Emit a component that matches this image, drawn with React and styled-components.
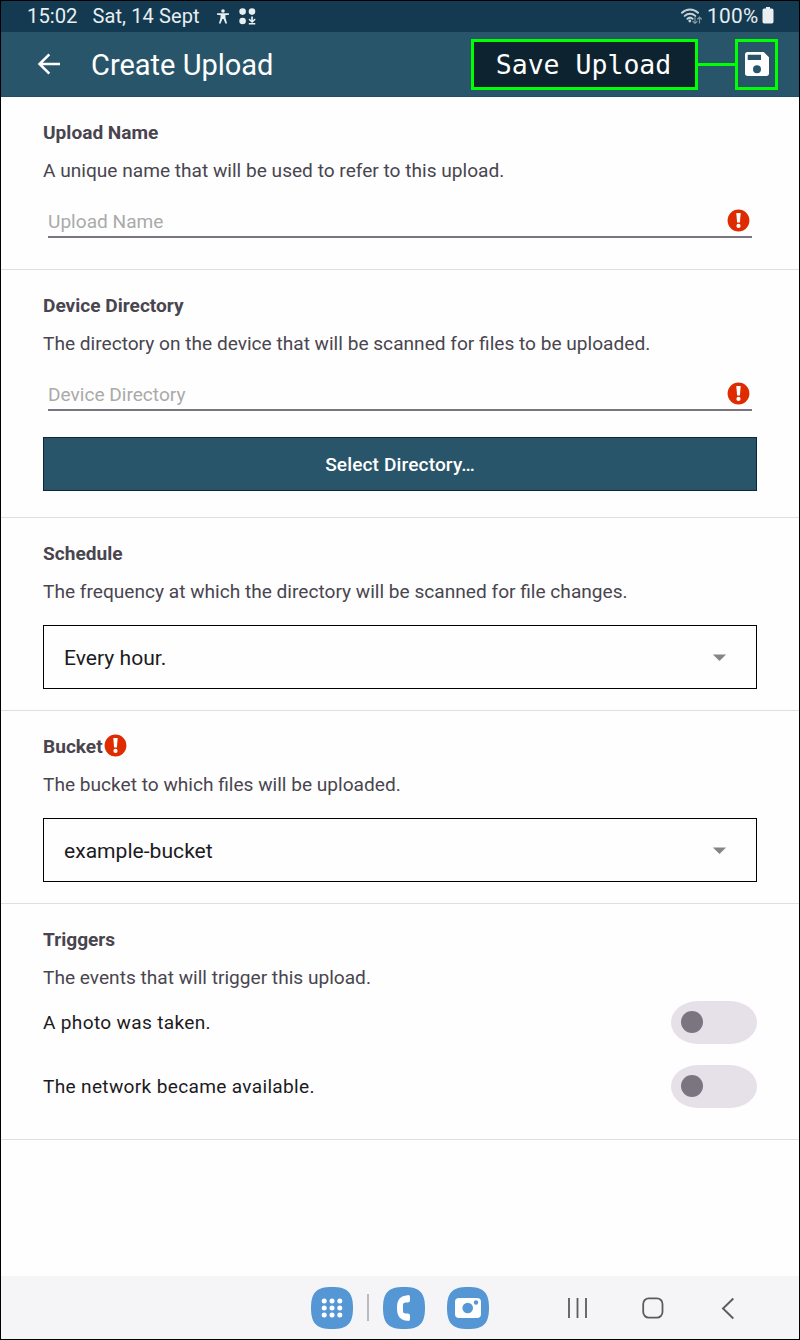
import React from "react";
import styled, { createGlobalStyle } from "styled-components";

const GlobalStyle = createGlobalStyle`
  * { box-sizing: border-box; }
  body { margin: 0; background: #fff; font-family: Roboto, "Liberation Sans", sans-serif; }
`;

const Screen = styled.div`
  width: 800px;
  height: 1340px;
  border: 1px solid #000;
  display: flex;
  flex-direction: column;
  background: #fefefe;
  overflow: hidden;
`;

const StatusBar = styled.div`
  height: 31px;
  flex: none;
  display: flex;
  align-items: center;
  justify-content: space-between;
  padding: 0 25.5px 1px 26px;
  background: #133a50;
  color: #e9eef1;
  font-size: 20px;
  line-height: 30px;
`;

const StatusGroup = styled.div`
  display: flex;
  align-items: center;
  white-space: pre;
  svg { display: block; }
`;

const StatusText = styled.span`
  font-size: ${(p) => p.$size || "20px"};
  letter-spacing: ${(p) => p.$spacing || "0"};
  margin-right: ${(p) => p.$gap || "0"};
`;

const Toolbar = styled.header`
  height: 65px;
  flex: none;
  display: flex;
  align-items: center;
  padding: 0 21px 0 35px;
  background: #29556b;
  border-bottom: 1px solid #214c63;
  color: #fff;
  svg { display: block; }
`;

const Heading = styled.h1`
  margin: 0 auto 0 31px;
  font-size: 29px;
  font-weight: 400;
  line-height: 40px;
  padding-top: 2px;
`;

const Callout = styled.div`
  width: 227px;
  height: 51px;
  padding-right: 2px;
  border: 3px solid #00ff00;
  background: #0d2430;
  font: 26.5px/45px "DejaVu Sans Mono", monospace;
  text-align: center;
  white-space: pre;
`;

const Connector = styled.div`
  width: 37px;
  height: 3px;
  background: #00ff00;
`;

const SaveButton = styled.button`
  width: 43px;
  height: 51px;
  padding: 0;
  border: 3px solid #00ff00;
  background: none;
  display: flex;
  align-items: center;
  justify-content: center;
`;

const Section = styled.section`
  flex: none;
  padding: 17px 42px ${(p) => p.$bottom}px;
  border-bottom: 1px solid #dfdfe0;
`;

const Title = styled.h2`
  margin: 0;
  height: 38px;
  padding-bottom: 2px;
  display: flex;
  align-items: center;
  gap: 1px;
  font-size: 19.1px;
  font-weight: 700;
  color: #49454f;
  svg { display: block; margin-top: -1px; }
`;

const Description = styled.p`
  margin: 0;
  font-size: 19.12px;
  line-height: 38px;
  color: #49454f;
  white-space: nowrap;
`;

const Field = styled.div`
  height: 48px;
  margin: 0 5px;
  padding: 14px 2px 0 0;
  display: flex;
  align-items: flex-start;
  justify-content: space-between;
  border-bottom: 2px solid #7b757f;
  color: #aaa;
  font-size: 19.1px;
  line-height: 35px;
  svg { display: block; margin-top: 5px; }
`;

const DirectoryButton = styled.button`
  display: block;
  width: 100%;
  height: 54px;
  margin-top: 26px;
  padding: 0;
  border: 1px solid #0a2638;
  background: #29556b;
  color: #fff;
  font: 500 19.1px/53px Roboto, sans-serif;
  letter-spacing: 0.12px;
`;

const Select = styled.div`
  height: 64px;
  margin-top: 14px;
  padding: 0 29px 0 20px;
  border: 1px solid #000;
  display: flex;
  align-items: center;
  justify-content: space-between;
  color: #1c1b1f;
  font-size: 21.1px;
  svg { display: block; margin-top: 2px; }
`;

const TriggerRow = styled.div`
  height: 43px;
  margin-top: ${(p) => p.$top}px;
  display: flex;
  align-items: center;
  justify-content: space-between;
  color: #1c1b1f;
  font-size: 19.1px;
  letter-spacing: 0.32px;
`;

const Toggle = styled.div`
  width: 86px;
  height: 43px;
  padding: 0 0 0.5px 10.4px;
  display: flex;
  align-items: center;
  border-radius: 27px / 21.5px;
  background: #e6e0e9;
`;

const Knob = styled.div`
  width: 22px;
  height: 22px;
  border-radius: 50%;
  background: #7a757f;
`;

const NavBar = styled.nav`
  height: 63px;
  flex: none;
  margin-top: auto;
  padding-left: 310px;
  display: flex;
  align-items: center;
  background: #f5f5f8;
  svg { display: block; flex: none; }
`;

const NavDivider = styled.div`
  width: 2px;
  height: 27px;
  margin: 0 14px;
  background: #bbbbbd;
`;

const Spacer = styled.div`
  width: ${(p) => p.$w}px;
`;

const ErrorIcon = () => (
  <svg width="23" height="23" viewBox="0 0 23 23">
    <circle cx="11.5" cy="11.5" r="10.9" fill="#df2b00" />
    <path d="M9.300 3.900h4.400l-.8 9.500h-2.800z" fill="#fff" />
    <circle cx="11.5" cy="16.900" r="2.100" fill="#fff" />
  </svg>
);

const Caret = () => (
  <svg width="15" height="8" viewBox="0 0 15 8">
    <path d="M.9.5h13.200L7.500 7.100z" fill="#858587" />
  </svg>
);

const AppTile = ({ children }) => (
  <svg width="42" height="42" viewBox="0 0 42 42">
    <path d="M21 0C36.5 0 42 5.5 42 21S36.5 42 21 42 0 36.500 0 21 5.500 0 21 0z" fill="#5596d4" />
    {children}
  </svg>
);

const AccessibilityIcon = () => (
  <svg width="12" height="15" viewBox="0 0 12 15">
    <circle cx="6" cy="2" r="1.8" fill="#e9eef1" />
    <path d="M0 4.300h12v1.500l-3.700.5.300 3 1.500 5.200H8.400L6.600 10H5.400l-1.800 4.500H1.900l1.500-5.200.300-3L0 5.800z" fill="#e9eef1" />
  </svg>
);

const DotsIcon = () => (
  <svg width="17" height="17" viewBox="0 0 17 17" fill="#e9eef1">
    <circle cx="3.600" cy="3.600" r="3.300" />
    <circle cx="13" cy="3.600" r="3.300" />
    <circle cx="3.600" cy="13" r="3.300" />
    <path d="M12.200 8.500h1.700v3.700l1.800-1.600.9 1.100-3.500 3.200-3.500-3.200.9-1.100 1.700 1.600zM9.800 15h6.500v1.500H9.800z" />
  </svg>
);

const WifiIcon = () => (
  <svg width="21" height="17" viewBox="0 0 21 17" fill="none" strokeLinecap="round">
    <g stroke="#c5d0d6" strokeWidth="2">
      <path d="M1 4.700C5.500.4 12.500.4 17 4.700" />
      <path d="M3.700 7.900c3-2.900 7.600-2.900 10.600 0" />
      <path d="M6.400 10.800c1.500-1.400 3.700-1.400 5.200 0" />
    </g>
    <circle cx="8.800" cy="13" r="1.400" fill="#c5d0d6" />
    <path d="M14 9.500v6M12 13.500l2 2 2-2M18.500 15V9M16.600 11l1.900-2 1.900 2" stroke="#7f96a3" strokeWidth="1.200" />
  </svg>
);

function FormSection({ title, description, invalid, bottom, children }) {
  return (
    <Section $bottom={bottom}>
      <Title>{title}{invalid && <ErrorIcon />}</Title>
      <Description>{description}</Description>
      {children}
    </Section>
  );
}

export default function App() {
  return (
    <>
      <GlobalStyle />
      <Screen>
        <StatusBar>
          <StatusGroup>
            <StatusText $gap="15px" $size="20.3px">15:02</StatusText>
            <StatusText $gap="17px" $spacing="0.1px">Sat, 14 Sept</StatusText>
            <AccessibilityIcon />
            <Spacer $w={10} />
            <DotsIcon />
          </StatusGroup>
          <StatusGroup>
            <WifiIcon />
            <Spacer $w={5} />
            <StatusText $gap="3px" $size="20.800px" $spacing="0.3px">100%</StatusText>
            <svg width="12" height="19" viewBox="0 0 12 19">
              <path d="M4 0h4v1.500h1.800q1.700 0 1.700 1.700v11.600q0 1.700-1.700 1.700H2.200Q.5 16.500.5 14.800V3.200Q.5 1.500 2.200 1.500H4z" fill="#e9eef1" />
            </svg>
          </StatusGroup>
        </StatusBar>
        <Toolbar>
          <svg width="24" height="22" viewBox="0 0 24 22" fill="none" stroke="#fff" strokeWidth="2.500">
            <path d="M24 11H3.500M13.300 1.300L3.500 11l9.800 9.700" />
          </svg>
          <Heading>Create Upload</Heading>
          <Callout>Save Upload</Callout>
          <Connector />
          <SaveButton aria-label="Save">
            <svg width="24" height="24" viewBox="0 0 24 24">
              <path fillRule="evenodd" d="M2.700 0H18.700L24 5.300v16q0 2.700-2.700 2.700H2.700Q0 24 0 21.300V2.700Q0 0 2.700 0zM2.700 2.700V8H16V2.700zM12 13.300a4 4 0 1 0 0 8 4 4 0 1 0 0-8z" fill="#fff" />
            </svg>
          </SaveButton>
        </Toolbar>

        <FormSection title="Upload Name" description="A unique name that will be used to refer to this upload." bottom={31}>
          <Field>Upload Name<ErrorIcon /></Field>
        </FormSection>
        <FormSection title="Device Directory" description="The directory on the device that will be scanned for files to be uploaded." bottom={26}>
          <Field>Device Directory<ErrorIcon /></Field>
          <DirectoryButton>Select Directory…</DirectoryButton>
        </FormSection>
        <FormSection title="Schedule" description="The frequency at which the directory will be scanned for file changes." bottom={21}>
          <Select>Every hour.<Caret /></Select>
        </FormSection>
        <FormSection title="Bucket" invalid description="The bucket to which files will be uploaded." bottom={21}>
          <Select>example-bucket<Caret /></Select>
        </FormSection>
        <FormSection title="Triggers" description="The events that will trigger this upload." bottom={31}>
          <TriggerRow $top={4}>A photo was taken.<Toggle><Knob /></Toggle></TriggerRow>
          <TriggerRow $top={21}>The network became available.<Toggle><Knob /></Toggle></TriggerRow>
        </FormSection>

        <NavBar>
          <AppTile>
            {[14, 21, 28].map((y) => [13.2, 21, 28.8].map((x) => (
              <circle key={`${x}-${y}`} cx={x} cy={y} r="2.500" fill="#fff" />
            )))}
          </AppTile>
          <NavDivider />
          <AppTile>
            <path d="M24.500 8.200q2.500-.5 2.500 1.800v3.200q0 2.200-2.200 2.200h-2.300q-2.500 0-2.500 2.500v6.200q0 2.500 2.500 2.500h2.300q2.200 0 2.200 2.200V32q0 2.300-2.500 1.800C17.500 33 14 30 14 21s3.500-12 10.500-12.800z" fill="#fff" />
          </AppTile>
          <Spacer $w={22} />
          <AppTile>
            <rect x="8" y="11" width="26" height="20" rx="4" fill="#fff" />
            <circle cx="20.700" cy="21" r="5.300" fill="#5596d4" />
            <circle cx="29" cy="15.500" r="2.200" fill="#5596d4" />
          </AppTile>
          <Spacer $w={78} />
          <svg width="21" height="23" viewBox="0 0 21 23" fill="none" stroke="#5c5c5e" strokeWidth="1.800">
            <path d="M2 2v20M10.500 2v20M19 2v20" />
          </svg>
          <Spacer $w={53.5} />
          <svg width="22" height="23" viewBox="0 0 22 23" fill="none" stroke="#5c5c5e" strokeWidth="1.800">
            <rect x="1.200" y="2.400" width="19.300" height="19.200" rx="5.500" />
          </svg>
          <Spacer $w={57.5} />
          <svg width="13" height="24" viewBox="0 0 13 24" fill="none" stroke="#5c5c5e" strokeWidth="1.900">
            <path d="M12.300 2.500L2 12.500l10.300 10" />
          </svg>
        </NavBar>
      </Screen>
    </>
  );
}
